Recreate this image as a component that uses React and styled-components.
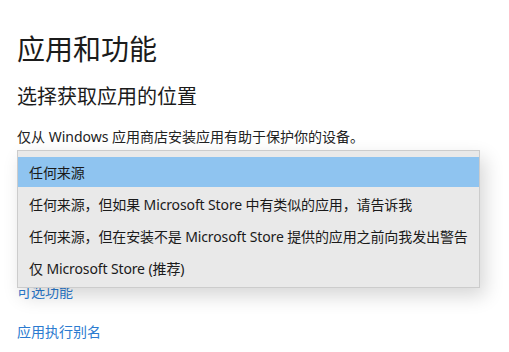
import React from "react";
import styled, { createGlobalStyle } from "styled-components";

const GlobalStyle = createGlobalStyle`
  html, body {
    margin: 0;
    padding: 0;
    background: #ffffff;
  }
  body {
    font-family: "Noto Sans", "Noto Sans CJK SC", sans-serif;
    color: #1a1a1a;
  }
`;

const Page = styled.div`
  width: 509px;
  height: 352px;
  overflow: hidden;
  box-sizing: border-box;
  padding: 29px 0 0 17px;
  background: #ffffff;
`;

const Title = styled.h1`
  margin: 0;
  font-size: 28px;
  line-height: 40px;
  font-weight: 400;
  color: #1b1b1b;
`;

const Subtitle = styled.h2`
  margin: 14px 0 0;
  font-size: 20px;
  line-height: 28px;
  font-weight: 400;
  color: #1b1b1b;
`;

const Description = styled.p`
  margin: 16px 0 0;
  font-size: 14px;
  line-height: 20px;
  color: #222222;
`;

const SelectArea = styled.div`
  position: relative;
  margin-top: 3px;
  width: 463px;
  height: 32px;
`;

const ComboBox = styled.div`
  box-sizing: border-box;
  height: 32px;
  width: 463px;
  border: 2px solid #999999;
  background: #ffffff;
`;

const Dropdown = styled.ul`
  position: absolute;
  top: 0;
  left: 0;
  box-sizing: border-box;
  width: 463px;
  margin: 0;
  padding: 6px 0 4px;
  list-style: none;
  display: flex;
  flex-direction: column;
  gap: 2px;
  background: #e9e9e9;
  border: 1px solid #cccccc;
  box-shadow: 5px 8px 18px rgba(0, 0, 0, 0.16);
  z-index: 2;
`;

const Option = styled.li`
  height: 30px;
  padding-left: 11px;
  display: flex;
  align-items: center;
  font-size: 14px;
  letter-spacing: -0.12px;
  color: #1a1a1a;
  background: ${(p) => (p.$selected ? "#8fc4f0" : "transparent")};
  white-space: nowrap;
`;

const Links = styled.div`
  display: flex;
  flex-direction: column;
  align-items: flex-start;
  gap: 20px;
  margin-top: 100px;
`;

const Link = styled.a`
  font-size: 14px;
  line-height: 20px;
  color: #2b7bd0;
  text-decoration: none;
`;

const options = [
  "任何来源",
  "任何来源，但如果 Microsoft Store 中有类似的应用，请告诉我",
  "任何来源，但在安装不是 Microsoft Store 提供的应用之前向我发出警告",
  "仅 Microsoft Store (推荐)",
];

export default function App() {
  return (
    <>
      <GlobalStyle />
      <Page>
        <Title>应用和功能</Title>
        <Subtitle>选择获取应用的位置</Subtitle>
        <Description>仅从 Windows 应用商店安装应用有助于保护你的设备。</Description>
        <SelectArea>
          <ComboBox />
          <Dropdown>
            {options.map((o, i) => (
              <Option key={o} $selected={i === 0}>
                {o}
              </Option>
            ))}
          </Dropdown>
        </SelectArea>
        <Links>
          <Link href="#">可选功能</Link>
          <Link href="#">应用执行别名</Link>
        </Links>
      </Page>
    </>
  );
}
